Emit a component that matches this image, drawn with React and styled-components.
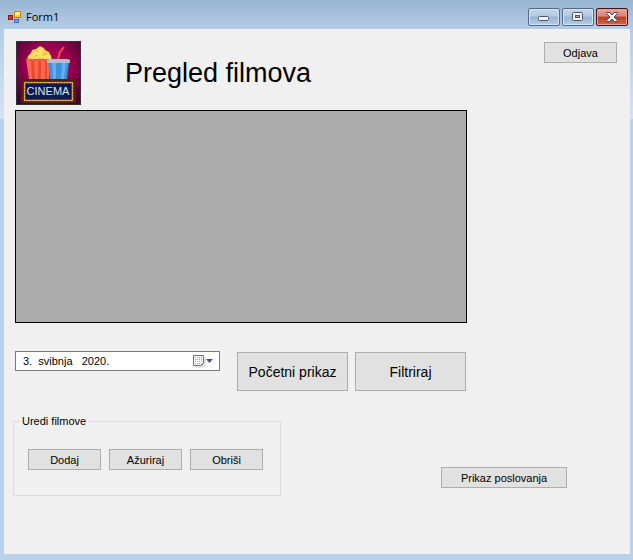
import React from 'react';
import styled, { createGlobalStyle, css } from 'styled-components';

const GlobalStyle = createGlobalStyle`
  * { box-sizing: border-box; }
  body { margin: 0; }
`;

const Window = styled.div`
  display: flex;
  flex-direction: column;
  min-height: 100vh;
  padding: 0 3px 6px 4px;
  font: 11px/15px "Liberation Sans", Arial, sans-serif;
  color: #000;
  background: #b9d1ea linear-gradient(#99b4d1, #b4cde7 29px, #d5e3f3 119px) no-repeat top / 100% 119px;
`;

const TitleBar = styled.header`
  display: flex;
  align-items: center;
  height: 29px;
  padding: 5px 2px 0 4px;
`;

const Caption = styled.span`
  flex: 1;
  margin-left: 4px;
  font: 11px/16px "Open Sans", "Noto Sans", sans-serif;
`;

const CaptionButtons = styled.div`
  display: flex;
  gap: 2px;
`;

const CaptionButton = styled.button`
  display: grid;
  place-items: center;
  width: 32px;
  height: 18px;
  padding: 0;
  border: 1px solid #53698a;
  border-radius: 2px;
  background: linear-gradient(#c3d6ea, #b3cae2 45%, #98b4d2 50%, #b5cee9);
  box-shadow: inset 0 0 0 1px #d5e4f3;
  ${({ $danger }) => $danger && css`
    border-color: #43141c;
    background: linear-gradient(#e8a99c, #d98473 45%, #b93c24 50%, #cf6a50);
    box-shadow: inset 0 0 0 1px #e3a294;
  `}
`;

const Client = styled.main`
  flex: 1;
  padding: 12px 0;
  background: #f0f0f0;
`;

const Header = styled.div`
  display: flex;
  align-items: flex-start;
  padding: 0 13px 0 12px;
`;

const Title = styled.h1`
  flex: 1;
  margin: 16px 0 0 44px;
  font-size: 27px;
  font-weight: 400;
  line-height: 32px;
`;

const Button = styled.button`
  width: ${({ $width = 73 }) => $width}px;
  height: 21px;
  padding: 2px 0 0;
  border: 1px solid #adadad;
  background: #e1e1e1;
  color: #000;
  font: inherit;
  ${({ $large }) => $large && css`
    height: 39px;
    font-size: 14px;
  `}
`;

const Corner = styled.div`
  padding-top: 1px;
`;

const Body = styled.section`
  margin: 5px 163px 0 11px;
`;

const DataArea = styled.div`
  height: 213px;
  border: 1px solid #000;
  background: #ababab;
`;

const FilterRow = styled.div`
  display: flex;
  align-items: flex-start;
  gap: 7px;
  margin: 29px 1px 0 0;
`;

const DatePicker = styled.div`
  display: flex;
  flex: 1;
  align-items: center;
  height: 20px;
  margin: -1px 10px 0 0;
  padding: 0 5px 0 7px;
  border: 1px solid #7a7a7a;
  background: #fff;
`;

const DateInput = styled.input`
  flex: 1;
  min-width: 0;
  padding: 0;
  border: 0;
  outline: 0;
  background: none;
  color: #000;
  font: inherit;
`;

const DropButton = styled.button`
  display: flex;
  padding: 0;
  border: 0;
  background: none;
`;

const Footer = styled.div`
  display: flex;
  align-items: flex-end;
  justify-content: space-between;
  margin-top: 23px;
  padding: 0 63px 0 9px;
`;

const Group = styled.fieldset`
  display: flex;
  gap: 8px;
  width: 268px;
  height: 82px;
  margin: 0;
  padding: 20px 14px 0;
  border: 1px solid #dcdcdc;
`;

const Legend = styled.legend`
  margin-left: -8px;
  padding: 0 2px;
`;

const ReportSlot = styled.div`
  padding-bottom: 8px;
`;

const FormIcon = () => (
  <svg width="14" height="14" viewBox="0 0 14 14" aria-hidden="true">
    <path d="M.5 1v12.500h13V1z" fill="none" stroke="#b9bec4" />
    <rect x="6.500" y="1.500" width="6" height="6" fill="#ffcf3c" stroke="#b98a12" />
    <path d="M7 2h5v2L7 6z" fill="#fff0a0" />
    <rect x=".5" y="5.500" width="4" height="4" fill="#d43b2d" stroke="#8f1d18" />
    <rect x="6.500" y="9.500" width="4" height="3" fill="#69a4f5" stroke="#3e6cc4" />
  </svg>
);

const Logo = () => (
  <svg width="65" height="64" viewBox="0 0 65 64" role="img" aria-label="Cinema">
    <defs>
      <radialGradient id="glow" cx=".5" cy=".4" r=".7">
        <stop offset="0" stopColor="#c5005f" />
        <stop offset=".5" stopColor="#96004f" />
        <stop offset="1" stopColor="#3c0429" />
      </radialGradient>
    </defs>
    <rect width="65" height="64" fill="url(#glow)" />
    <rect x=".5" y=".5" width="64" height="63" fill="none" stroke="#333b3c" strokeDasharray="3 1" />
    <path d="M11 19l1-4 3-3 1-3 4-1 4-3 4 2 1 2 4 2 2 4 1 4-1 2H11z" fill="#f8ce46" />
    <path d="M14 14l4-2 3-4 4-2 3 3-2 3 4 1 4 1 1 3-6 1-4-2-5 2-6-1z" fill="#ffe06c" />
    <path d="M17 16l5-2M26 14l5-1M20 9l3 2" stroke="#f0b52f" />
    <path d="M10 18h24l-1 20H13z" fill="#ff6849" />
    <path d="M15 20h3l1 18h-3zM22 20h3v18h-3zM29 20h2v18h-2z" fill="#e64a35" />
    <path d="M10 18h24v2H10z" fill="#f05a40" />
    <path d="M42 18l2-7 4-5" fill="none" stroke="#ff4b3e" strokeWidth="2" />
    <path d="M32 21h21l-2 17H34z" fill="#3c91df" />
    <path d="M36 22h4v16h-3zM46 22h4l-2 16h-3z" fill="#68adeb" />
    <path d="M33 18h19l2 1v3H31v-3z" fill="#b7bac9" />
    <rect x="5" y="38" width="55" height="24" fill="#4d210d" />
    <rect x="7" y="40" width="51" height="21" fill="#120c13" />
    <rect x="8.500" y="41.500" width="48" height="18" fill="#0b1c4c" stroke="#a95c25" strokeWidth="2" />
    <rect x="8.500" y="41.500" width="48" height="18" fill="none" stroke="#ffc05c" strokeDasharray="2 1" />
    <text x="32" y="54" textAnchor="middle" fontFamily="Liberation Sans, Arial, sans-serif" fontSize="11" fill="#dce7f5">CINEMA</text>
  </svg>
);

const CalendarIcon = () => (
  <svg width="21" height="14" viewBox="0 0 21 14" aria-hidden="true">
    <path d="M2 13h8l2-2V3" fill="none" stroke="#cfcac4" />
    <path d="M.5 1.500h10v8l-2 2h-8z" fill="#f5f7fa" stroke="#7c706b" />
    <path d="M2 3.500h7M2 5.500h7M2 7.500h7M2 9.500h6" stroke="#9badc5" strokeDasharray="1 1" />
    <path d="M8.500 11.500v-2h2z" fill="#5d534f" />
    <path d="M13 5h7l-3.500 4z" fill="#40587f" />
  </svg>
);

const MinimizeIcon = () => (
  <svg width="12" height="10" viewBox="0 0 12 10" aria-hidden="true">
    <rect x=".5" y="4.500" width="10" height="4" rx="1" fill="#f4f4f4" stroke="#4c5365" />
  </svg>
);

const MaximizeIcon = () => (
  <svg width="12" height="10" viewBox="0 0 12 10" aria-hidden="true">
    <rect x=".5" y=".5" width="10" height="8" rx="1" fill="#f4f4f4" stroke="#4c5365" />
    <rect x="3.500" y="3.500" width="4" height="2" fill="#8fb0d4" stroke="#4c5365" />
  </svg>
);

const CloseIcon = () => (
  <svg width="12" height="10" viewBox="0 0 12 10" aria-hidden="true">
    <path d="M.5.5h3L6 3 8.500.5h3v1L8 5l3.500 3.500v1h-3L6 7 3.500 9.500h-3v-1L4 5 .5 1.500z" fill="#f4f4f4" stroke="#4c4453" />
  </svg>
);

export default function App() {
  return (
    <Window>
      <GlobalStyle />
      <TitleBar>
        <FormIcon />
        <Caption>Form1</Caption>
        <CaptionButtons>
          <CaptionButton type="button" aria-label="Minimize"><MinimizeIcon /></CaptionButton>
          <CaptionButton type="button" aria-label="Maximize"><MaximizeIcon /></CaptionButton>
          <CaptionButton type="button" aria-label="Close" $danger><CloseIcon /></CaptionButton>
        </CaptionButtons>
      </TitleBar>
      <Client>
        <Header>
          <Logo />
          <Title>Pregled filmova</Title>
          <Corner><Button type="button">Odjava</Button></Corner>
        </Header>
        <Body>
          <DataArea />
          <FilterRow>
            <DatePicker>
              <DateInput aria-label="Datum" defaultValue={'3.\u00a0\u00a0svibnja\u00a0\u00a0\u00a02020.'} />
              <DropButton type="button" aria-label="Otvori kalendar"><CalendarIcon /></DropButton>
            </DatePicker>
            <Button type="button" $large $width={111}>Početni prikaz</Button>
            <Button type="button" $large $width={111}>Filtriraj</Button>
          </FilterRow>
        </Body>
        <Footer>
          <Group>
            <Legend>Uredi filmove</Legend>
            <Button type="button">Dodaj</Button>
            <Button type="button">Ažuriraj</Button>
            <Button type="button">Obriši</Button>
          </Group>
          <ReportSlot><Button type="button" $width={126}>Prikaz poslovanja</Button></ReportSlot>
        </Footer>
      </Client>
    </Window>
  );
}
